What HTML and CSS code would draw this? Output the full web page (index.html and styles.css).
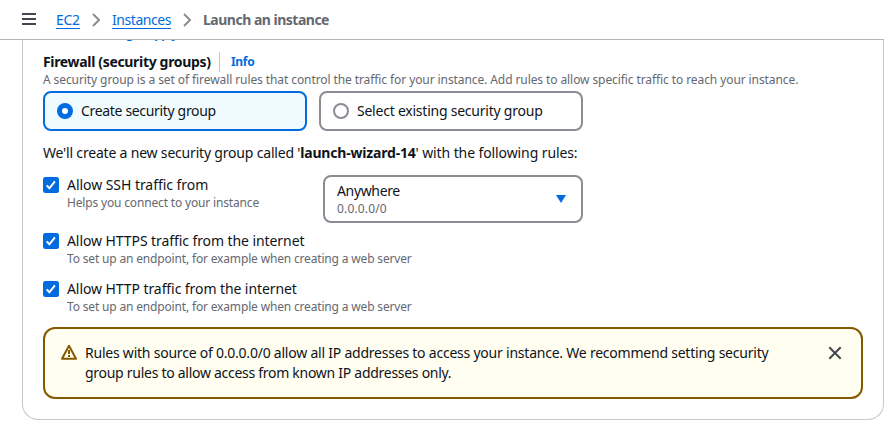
FILE: index.html
```
<!DOCTYPE html>
<html lang="en">
<head>
<meta charset="utf-8">
<title>Launch an instance</title>
<link rel="stylesheet" href="styles.css">
</head>
<body>
<header class="topbar">
  <svg class="menu" viewBox="0 0 14 12"><path d="M0 1h14M0 6h14M0 11h14"/></svg>
  <nav class="crumbs">
    <a class="crumb ec2">EC2</a>
    <svg class="chevron" viewBox="0 0 8 14"><path d="M1 1l6 6-6 6"/></svg>
    <a class="crumb instances">Instances</a>
    <svg class="chevron" viewBox="0 0 8 14"><path d="M1 1l6 6-6 6"/></svg>
    <span class="current">Launch an instance</span>
  </nav>
</header>
<main class="panel">
  <div class="charges"><a>Additional charges apply</a></div>
  <div class="title"><h2>Firewall (security groups)</h2><a class="info">Info</a></div>
  <p class="desc">A security group is a set of firewall rules that control the traffic for your instance. Add rules to allow specific traffic to reach your instance.</p>
  <div class="tiles">
    <label class="tile selected"><span class="radio"></span><span class="t-create">Create security group</span></label>
    <label class="tile"><span class="radio"></span><span class="t-select">Select existing security group</span></label>
  </div>
  <p class="intro">We'll create a new security group called '<b>launch-wizard-14</b><span class="rest">' with the following rules:</span></p>
  <div class="ssh">
    <div class="check">
      <svg class="box" viewBox="0 0 16 16"><rect width="16" height="16" rx="2.5"/><path d="M3.6 8.4l2.8 2.9 5.5-7"/></svg>
      <div><div class="label l-ssh">Allow SSH traffic from</div><div class="hint">Helps you connect to your instance</div></div>
    </div>
    <div class="select">
      <div><div class="label l-any">Anywhere</div><div class="hint h-ip">0.0.0.0/0</div></div>
      <svg class="caret" viewBox="0 0 10 8"><path d="M0 0h10L5 8z"/></svg>
    </div>
  </div>
  <div class="check https">
    <svg class="box" viewBox="0 0 16 16"><rect width="16" height="16" rx="2.5"/><path d="M3.6 8.4l2.8 2.9 5.5-7"/></svg>
    <div><div class="label">Allow HTTPS traffic from the internet</div><div class="hint">To set up an endpoint, for example when creating a web server</div></div>
  </div>
  <div class="check http">
    <svg class="box" viewBox="0 0 16 16"><rect width="16" height="16" rx="2.5"/><path d="M3.6 8.4l2.8 2.9 5.5-7"/></svg>
    <div><div class="label">Allow HTTP traffic from the internet</div><div class="hint">To set up an endpoint, for example when creating a web server</div></div>
  </div>
  <div class="alert">
    <svg class="warn" viewBox="0 0 16 16"><path d="M8 1.8L15 14.8H1z"/><path class="mark" d="M8 6v4M8 11v2"/></svg>
    <p><span class="a1">Rules with source of 0.0.0.0/0 allow all IP addresses to access your instance. We recommend setting security</span><br><span class="a2">group rules to allow access from known IP addresses only.</span></p>
    <svg class="close" viewBox="0 0 14 14"><path d="M1.3 1.3l11.4 11.4M12.7 1.3L1.3 12.7"/></svg>
  </div>
</main>
</body>
</html>
```
FILE: styles.css
```
* { box-sizing: border-box; }
body {
  margin: 0;
  height: 422px;
  overflow: hidden;
  background: #fff;
  color: #0f141a;
  font: 14px/20px "Noto Sans", sans-serif;
}
h2, p { margin: 0; }
svg { display: block; flex: none; fill: none; }
span, a, .label, .hint, .desc, .intro { white-space: nowrap; }

.topbar {
  display: flex;
  align-items: center;
  height: 40px;
  padding-left: 22px;
  border-bottom: 1px solid #b4b4bb;
}
.menu { width: 14px; height: 12px; margin-bottom: 1px; stroke: #424650; stroke-width: 2; }
.crumbs { display: flex; align-items: center; margin-left: 20px; }
.crumb { color: #006ce0; height: 19px; line-height: 20px; border-bottom: 1px solid #006ce0; }
.ec2 { width: 24px; letter-spacing: -0.3px; }
.instances { width: 59px; letter-spacing: -0.43px; }
.chevron { width: 8px; height: 14px; margin: 0 12px; stroke: #8c8c94; stroke-width: 2; }
.current { color: #656871; font-weight: 700; letter-spacing: -0.5px; }

.panel {
  height: 380px;
  margin-left: 22px;
  padding: 0 20px;
  border: 1px solid #c6c6cd;
  border-top: 0;
  border-radius: 0 0 16px 16px;
}
.charges {
  display: flex;
  align-items: flex-end;
  height: 2px;
  overflow: hidden;
  color: #006ce0;
  font-size: 12px;
  font-weight: 700;
  line-height: 16px;
  letter-spacing: -0.57px;
}
.title { display: flex; align-items: center; height: 20px; margin-top: 10px; }
h2 {
  width: 176px;
  font-size: 14px;
  line-height: 20px;
  font-weight: 700;
  letter-spacing: -0.33px;
  white-space: nowrap;
}
.info {
  padding-left: 11px;
  border-left: 1px solid #c6c6cd;
  color: #006ce0;
  font-size: 12px;
  font-weight: 700;
  letter-spacing: -0.3px;
}
.desc { color: #656871; font-size: 12px; line-height: 16px; letter-spacing: -0.09px; }

.tiles { display: flex; gap: 12px; margin-top: 3px; }
.tile {
  display: flex;
  align-items: center;
  gap: 8px;
  width: 264px;
  height: 40px;
  padding-left: 12px;
  border: 2px solid #8c8c94;
  border-radius: 8px;
}
.selected { border-color: #006ce0; background: #f0fbff; }
.radio { width: 16px; height: 16px; border: 2px solid #8c8c94; border-radius: 50%; background: #fff; }
.selected .radio { border: 5px solid #006ce0; }
.t-create { letter-spacing: -0.33px; }
.t-select { letter-spacing: -0.23px; }
.intro { margin-top: 12px; letter-spacing: -0.19px; }
.rest { letter-spacing: -0.1px; }

.ssh { display: flex; margin-top: 12px; }
.ssh .check { width: 280px; }
.check { display: flex; gap: 8px; }
.box { width: 16px; height: 16px; margin-top: 2px; fill: #006ce0; }
.box path { fill: none; stroke: #fff; stroke-width: 2; }
.label { letter-spacing: -0.08px; }
.l-ssh { letter-spacing: -0.05px; }
.l-any { letter-spacing: -0.35px; }
.hint { color: #656871; font-size: 12px; line-height: 16px; letter-spacing: -0.165px; }
.h-ip { letter-spacing: 0.15px; }
.select {
  display: flex;
  align-items: center;
  justify-content: space-between;
  width: 260px;
  height: 48px;
  padding: 0 15px 0 12px;
  border: 2px solid #8c8c94;
  border-radius: 8px;
}
.caret { width: 10px; height: 8px; fill: #006ce0; }
.https { margin-top: 8px; }
.http { margin-top: 12px; }

.alert {
  display: flex;
  height: 72px;
  margin-top: 12px;
  padding: 14px 19px 0 16px;
  border: 2px solid #855900;
  border-radius: 12px;
  background: #fffef0;
}
.alert p { flex: 1; margin-left: 8px; }
.a1 { letter-spacing: -0.225px; }
.a2 { letter-spacing: -0.28px; }
.warn { width: 16px; height: 16px; margin-top: 1px; stroke: #855900; stroke-width: 2; stroke-linejoin: round; }
.warn .mark { stroke-linejoin: miter; }
.close { width: 14px; height: 14px; margin-top: 3px; stroke: #424650; stroke-width: 2; }
```
